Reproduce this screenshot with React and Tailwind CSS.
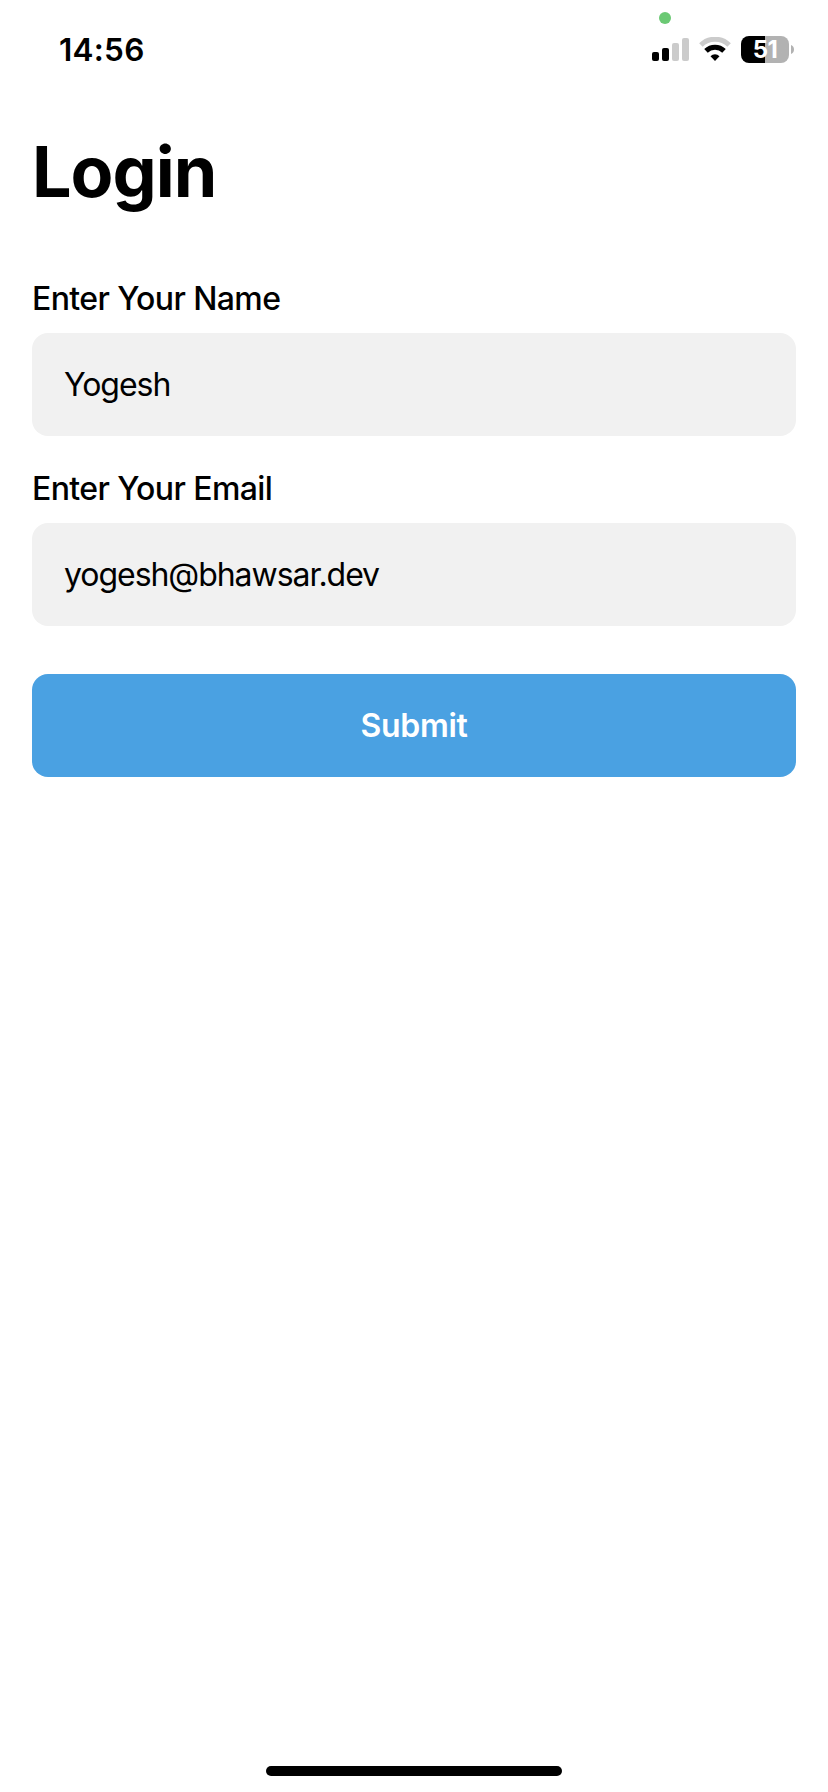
import React from "react";

function Signal() {
  return (
    <svg width="37" height="23" viewBox="0 0 37 23" className="block">
      <rect x="0" y="14" width="7" height="9" rx="2" fill="#000" />
      <rect x="10" y="10" width="7" height="13" rx="2" fill="#000" />
      <rect x="20" y="5" width="7" height="18" rx="2" fill="#cbcbcb" />
      <rect x="30" y="0" width="7" height="23" rx="2" fill="#cbcbcb" />
    </svg>
  );
}

function Wifi() {
  return (
    <svg width="32" height="25" viewBox="0 0 32 25" className="block" fill="none">
      <path d="M1.9 8A20 20 0 0 1 30.1 8" stroke="#cbcbcb" strokeWidth="5" />
      <path d="M7 13.9A12.8 12.8 0 0 1 25 13.9" stroke="#000" strokeWidth="5" />
      <path d="M16 24L11.5 19.2A6.4 6.4 0 0 1 20.5 19.2Z" fill="#000" />
    </svg>
  );
}

function Battery() {
  return (
    <div className="flex items-center gap-[2px]">
      <div className="flex h-[27px] w-12 items-center justify-center rounded-[8px] bg-linear-to-r from-black from-50% to-[#b2b2b2] to-50%">
        <span className="text-[24px] leading-[27px] font-bold tracking-[-0.5px] text-white">51</span>
      </div>
      <svg width="3" height="9" viewBox="0 0 3 9" className="block">
        <path d="M0 0Q3 1.2 3 4.5T0 9Z" fill="#b2b2b2" />
      </svg>
    </div>
  );
}

function Field({ label, value }) {
  return (
    <div className="flex flex-col">
      <span className="flex h-[38px] items-center pt-px text-[32px] leading-[37px] font-medium tracking-[-0.6px] whitespace-nowrap">{label}</span>
      <div className="mt-4 flex h-[103px] items-center rounded-2xl bg-[#f1f1f1] px-8 text-[32px] tracking-[-1.05px]">
        {value}
      </div>
    </div>
  );
}

export default function App() {
  return (
    <div className="relative flex h-[1792px] w-[828px] flex-col bg-white font-[Inter,sans-serif] text-black">
      <div className="absolute top-[12px] left-[659px] size-3 rounded-full bg-[#6bc974]" />
      <header className="flex h-[99px] items-center justify-between pr-[34px] pl-[59px]">
        <span className="text-[31.5px] leading-[38px] font-semibold tracking-[0.25px]">14:56</span>
        <div className="flex items-center gap-[10px]">
          <Signal />
          <Wifi />
          <Battery />
        </div>
      </header>
      <main className="flex flex-col px-8">
        <h1 className="mt-[31px] h-[84px] text-[70px] leading-[84px] font-bold tracking-[-1px]">Login</h1>
        <div className="mt-[65px] flex flex-col gap-[33px]">
          <Field label="Enter Your Name" value="Yogesh" />
          <Field label="Enter Your Email" value="yogesh@bhawsar.dev" />
        </div>
        <button className="mt-12 flex h-[103px] items-center justify-center rounded-2xl bg-[#4aa1e2] text-[32px] font-semibold tracking-[-0.35px] text-white">
          Submit
        </button>
      </main>
      <div className="mx-auto mt-auto mb-4 h-[10px] w-[296px] rounded-full bg-black" />
    </div>
  );
}
